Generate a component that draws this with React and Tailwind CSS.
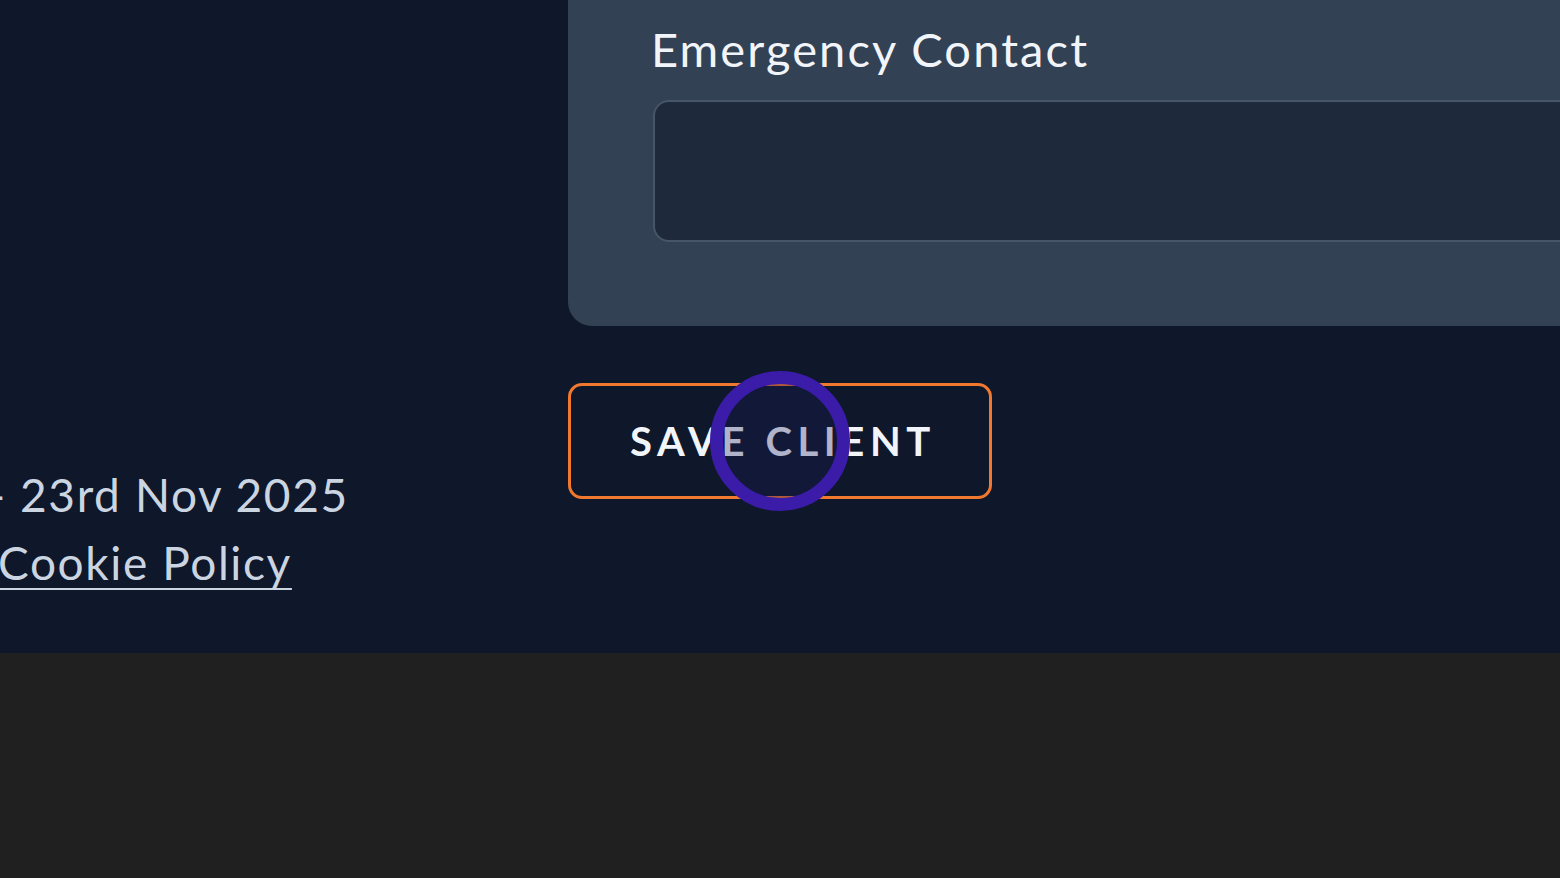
const App = () => {
  return (
    <div className="flex h-[878px] w-[1560px] flex-col overflow-hidden bg-[#202020]" style={{ fontFamily: 'Lato, "Noto Sans", sans-serif' }}>
      {/* Page area */}
      <div className="flex h-[653px] bg-[#0f172a]">
        {/* Footer text column (clipped at the left edge) */}
        <div className="w-[568px] shrink-0 overflow-hidden pt-[466px]">
          <p className="-ml-[12px] whitespace-nowrap text-[46px] leading-[58px] tracking-[0.035em] text-[#cbd5e1]">- 23rd Nov 2025</p>
          <a href="#" className="-ml-[2px] mt-[10px] block whitespace-nowrap text-[46px] leading-[58px] tracking-[0.035em] text-[#cbd5e1] underline decoration-2 underline-offset-[8px]">Cookie Policy</a>
        </div>

        {/* Form column */}
        <div className="flex min-w-0 flex-1 flex-col">
          <div className="h-[326px] rounded-bl-[24px] bg-[#334155] pl-[85px] pt-[20px]">
            <label className="-ml-[2px] block whitespace-nowrap text-[47px] leading-[58px] tracking-[0.045em] text-[#f1f5f9]">Emergency Contact</label>
            <div className="mt-[22px] h-[142px] rounded-l-[16px] border-2 border-r-0 border-[#475569] bg-[#1e293b]" />
          </div>

          <div className="relative mt-[57px] w-[424px]">
            <button className="flex h-[116px] w-[424px] items-center justify-center rounded-[14px] border-[3px] border-[#f0782f] bg-transparent pl-[6px] text-[40px] font-bold tracking-[0.14em] text-[#f1f5f9]">
              SAVE CLIENT
            </button>
            {/* click indicator */}
            <div className="pointer-events-none absolute left-[142px] top-[-12px] h-[140px] w-[140px] rounded-full border-[13px] border-[#3a1ca8] bg-[#1a1a5a]/30" />
          </div>
        </div>
      </div>
    </div>
  );
};

export default App;
